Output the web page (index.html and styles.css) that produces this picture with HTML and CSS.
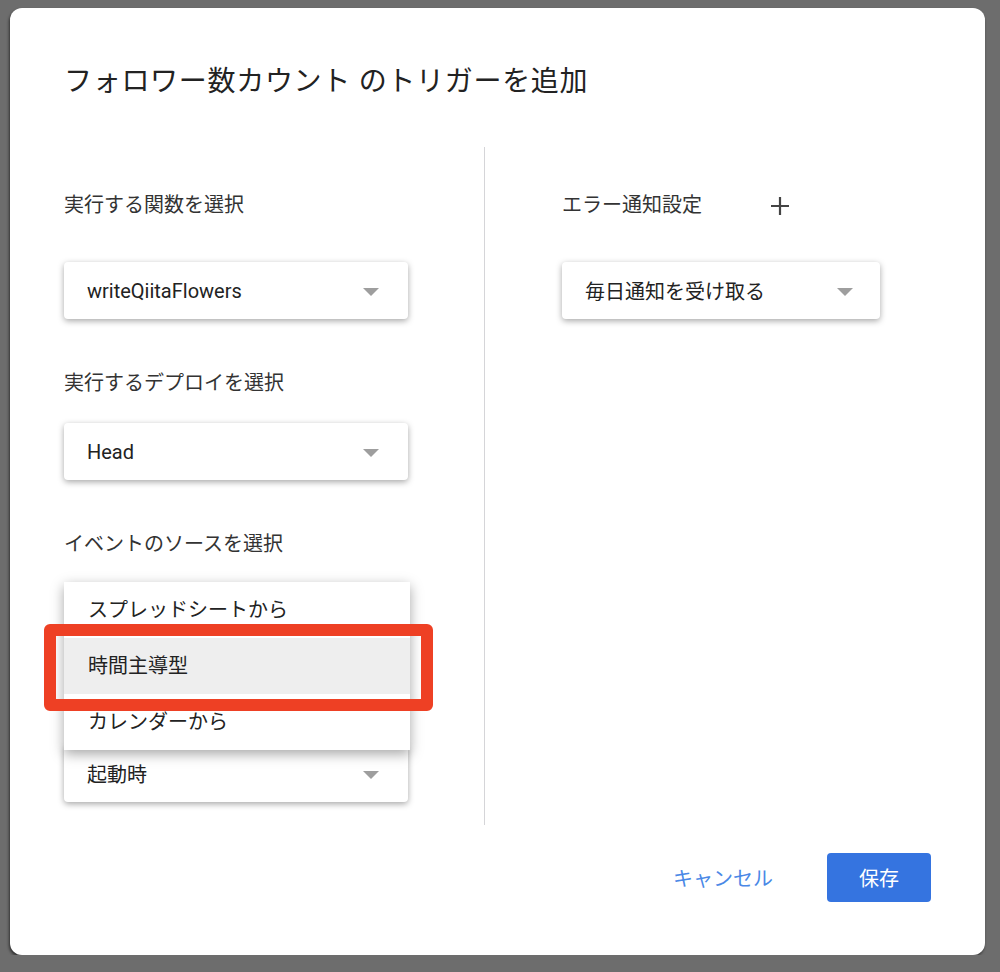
FILE: index.html
```html
<!DOCTYPE html>
<html lang="ja">
<head>
    <meta charset="UTF-8">
    <title>トリガーを追加</title>
    <link rel="stylesheet" href="styles.css">
</head>
<body>
    <div class="dialog">
        <h1 class="dialog-title">フォロワー数カウント のトリガーを追加</h1>

        <div class="dialog-body">
            <div class="col-left">
                <div class="label label-first">実行する関数を選択</div>
                <div class="select"><span>writeQiitaFlowers</span><i class="caret"></i></div>

                <div class="label">実行するデプロイを選択</div>
                <div class="select"><span>Head</span><i class="caret"></i></div>

                <div class="label">イベントのソースを選択</div>
                <div class="source-wrap">
                    <!-- メニューの下に隠れている部分 -->
                    <div class="select covered"></div>
                    <div class="label covered">&nbsp;</div>
                    <div class="select"><span>起動時</span><i class="caret"></i></div>

                    <ul class="menu">
                        <li>スプレッドシートから</li>
                        <li class="active">時間主導型</li>
                        <li>カレンダーから</li>
                    </ul>
                    <div class="mark"></div>
                </div>
            </div>

            <div class="divider"></div>

            <div class="col-right">
                <div class="label label-first label-row">
                    エラー通知設定
                    <svg class="plus" width="20" height="20" viewBox="0 0 20 20">
                        <path d="M10 1v18M1 10h18" stroke="#444" stroke-width="2.2" fill="none"/>
                    </svg>
                </div>
                <div class="select"><span>毎日通知を受け取る</span><i class="caret"></i></div>
            </div>
        </div>

        <div class="dialog-footer">
            <button class="btn-text">キャンセル</button>
            <button class="btn-primary">保存</button>
        </div>
    </div>
</body>
</html>
```

FILE: styles.css
```css
/* ダイアログ */
body {
    margin: 0;
    background-color: #6d6d6d;
    font-family: Roboto, "Noto Sans CJK JP", sans-serif;
    color: #202124;
}

.dialog {
    box-sizing: border-box;
    width: 975px;
    height: 947px;
    margin: 8px 0 0 10px;
    padding: 54px 54px 0 54px;
    background-color: #fff;
    border-radius: 12px;
    box-shadow: -1px 2px 3px rgba(0, 0, 0, 0.55);
}

.dialog-title {
    margin: 0;
    font-size: 28px;
    font-weight: normal;
    line-height: 40px;
    letter-spacing: 0.7px;
    color: #222;
}

.dialog-body {
    display: flex;
    margin-top: 45px;
    height: 678px;
}

.col-left {
    width: 346px;
}

.col-right {
    width: 318px;
    margin-left: 77px;
}

.divider {
    width: 1px;
    background-color: #d5d5d8;
    margin-left: 74px;
}

.label {
    font-size: 20px;
    line-height: 24px;
    color: #333;
    margin-top: 52px;
    margin-bottom: 28px;
}

.label-first {
    margin-top: 46px;
    margin-bottom: 45px;
}

.label-row {
    display: flex;
    align-items: center;
}

.plus {
    margin-left: 68px;
    margin-top: 2px;
}

.select {
    box-sizing: border-box;
    height: 57px;
    width: 344px;
    padding: 0 29px 0 23px;
    display: flex;
    align-items: center;
    justify-content: space-between;
    font-size: 20px;
    color: #222;
    background-color: #fff;
    border-radius: 4px;
    box-shadow: 0 2px 6px rgba(0, 0, 0, 0.35);
}

.covered {
    visibility: hidden;
}

.col-right .select {
    width: 318px;
    padding-right: 27px;
}

.caret {
    width: 0;
    height: 0;
    border-left: 8px solid transparent;
    border-right: 8px solid transparent;
    border-top: 8px solid #9e9e9e;
    margin-top: 2px;
}

.source-wrap {
    position: relative;
}

.menu {
    position: absolute;
    top: -2px;
    left: 0;
    width: 346px;
    margin: 0;
    padding: 0;
    list-style: none;
    background-color: #fff;
    box-shadow: 0 4px 12px rgba(0, 0, 0, 0.35);
}

.menu li {
    height: 56px;
    line-height: 56px;
    padding-left: 24px;
    font-size: 20px;
    color: #222;
}

.menu li.active {
    background-color: #eeeeee;
}

/* 赤枠 */
.mark {
    position: absolute;
    left: -20px;
    top: 40px;
    box-sizing: border-box;
    width: 389px;
    height: 87px;
    border: 12px solid #ee4024;
    border-radius: 6px;
}

.dialog-footer {
    display: flex;
    justify-content: flex-end;
    align-items: center;
    margin-top: 28px;
}

button {
    font-family: Roboto, "Noto Sans CJK JP", sans-serif;
    font-size: 20px;
    border: none;
    cursor: pointer;
}

.btn-text {
    background: none;
    color: #4a88e6;
    padding: 0 16px;
    margin-right: 38px;
}

.btn-primary {
    width: 104px;
    height: 49px;
    background-color: #3574e0;
    color: #fff;
    border-radius: 4px;
}
```
